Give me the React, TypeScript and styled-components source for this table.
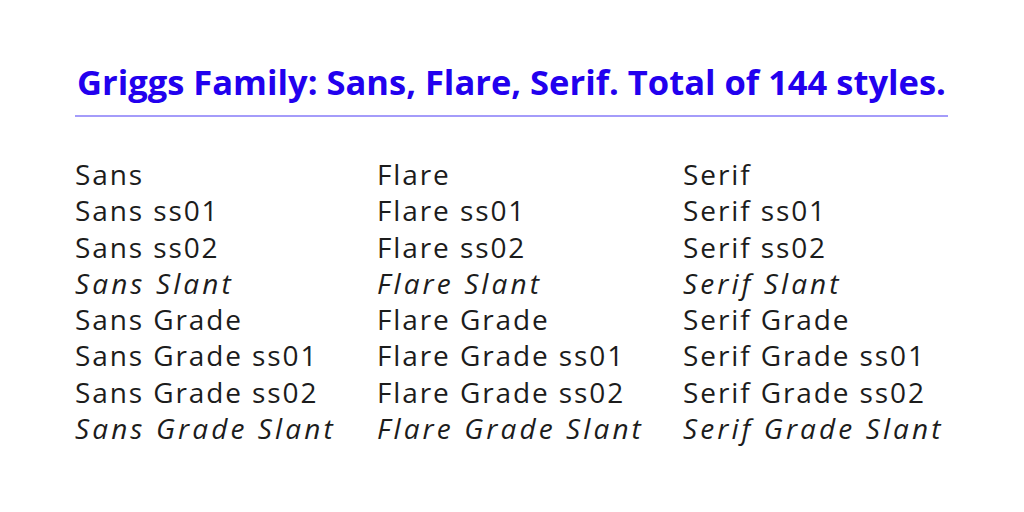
import React from "react";
import styled, { createGlobalStyle } from "styled-components";

const Global = createGlobalStyle`
  html, body { margin: 0; padding: 0; background: #ffffff; }
  body { width: 1024px; height: 512px; overflow: hidden; }
`;

const Page = styled.div`
  width: 1024px;
  height: 512px;
  box-sizing: border-box;
  padding: 60px 76px 0 75px;
  display: flex;
  flex-direction: column;
  font-family: "Open Sans", "Noto Sans", sans-serif;
`;

const Title = styled.h1`
  margin: 0;
  width: 873px;
  text-align: center;
  color: #2200ee;
  font-size: 34.5px;
  font-weight: 700;
  line-height: 44px;
  white-space: nowrap;
`;

const Rule = styled.div`
  width: 873px;
  height: 2px;
  background: #a49cfa;
  margin-top: 11px;
`;

const Grid = styled.div`
  margin-top: 39px;
  display: grid;
  grid-template-columns: 302px 306px auto;
  grid-auto-rows: 36.3px;
`;

const Item = styled.div<{ $slant?: boolean; $grade?: boolean; $serif?: boolean }>`
  color: #1c1c1c;
  font-size: 28px;
  line-height: 36px;
  white-space: nowrap;
  font-weight: ${(p) => (p.$grade || p.$serif ? 500 : 400)};
  font-style: ${(p) => (p.$slant ? "italic" : "normal")};
  letter-spacing: ${(p) => (p.$slant ? "3.1px" : "1.9px")};
`;

const families = ["Sans", "Flare", "Serif"];
const suffixes = ["", " ss01", " ss02", " Slant", " Grade", " Grade ss01", " Grade ss02", " Grade Slant"];

export default function App() {
  const cells: React.ReactNode[] = [];
  suffixes.forEach((s, r) => {
    families.forEach((f, c) => {
      cells.push(
        <Item
          key={`${r}-${c}`}
          $slant={s.includes("Slant")}
          $grade={s.includes("Grade")}
          $serif={f === "Serif"}
        >
          {f + s}
        </Item>
      );
    });
  });
  return (
    <>
      <Global />
      <Page>
        <Title>Griggs Family: Sans, Flare, Serif. Total of 144 styles.</Title>
        <Rule />
        <Grid>{cells}</Grid>
      </Page>
    </>
  );
}
